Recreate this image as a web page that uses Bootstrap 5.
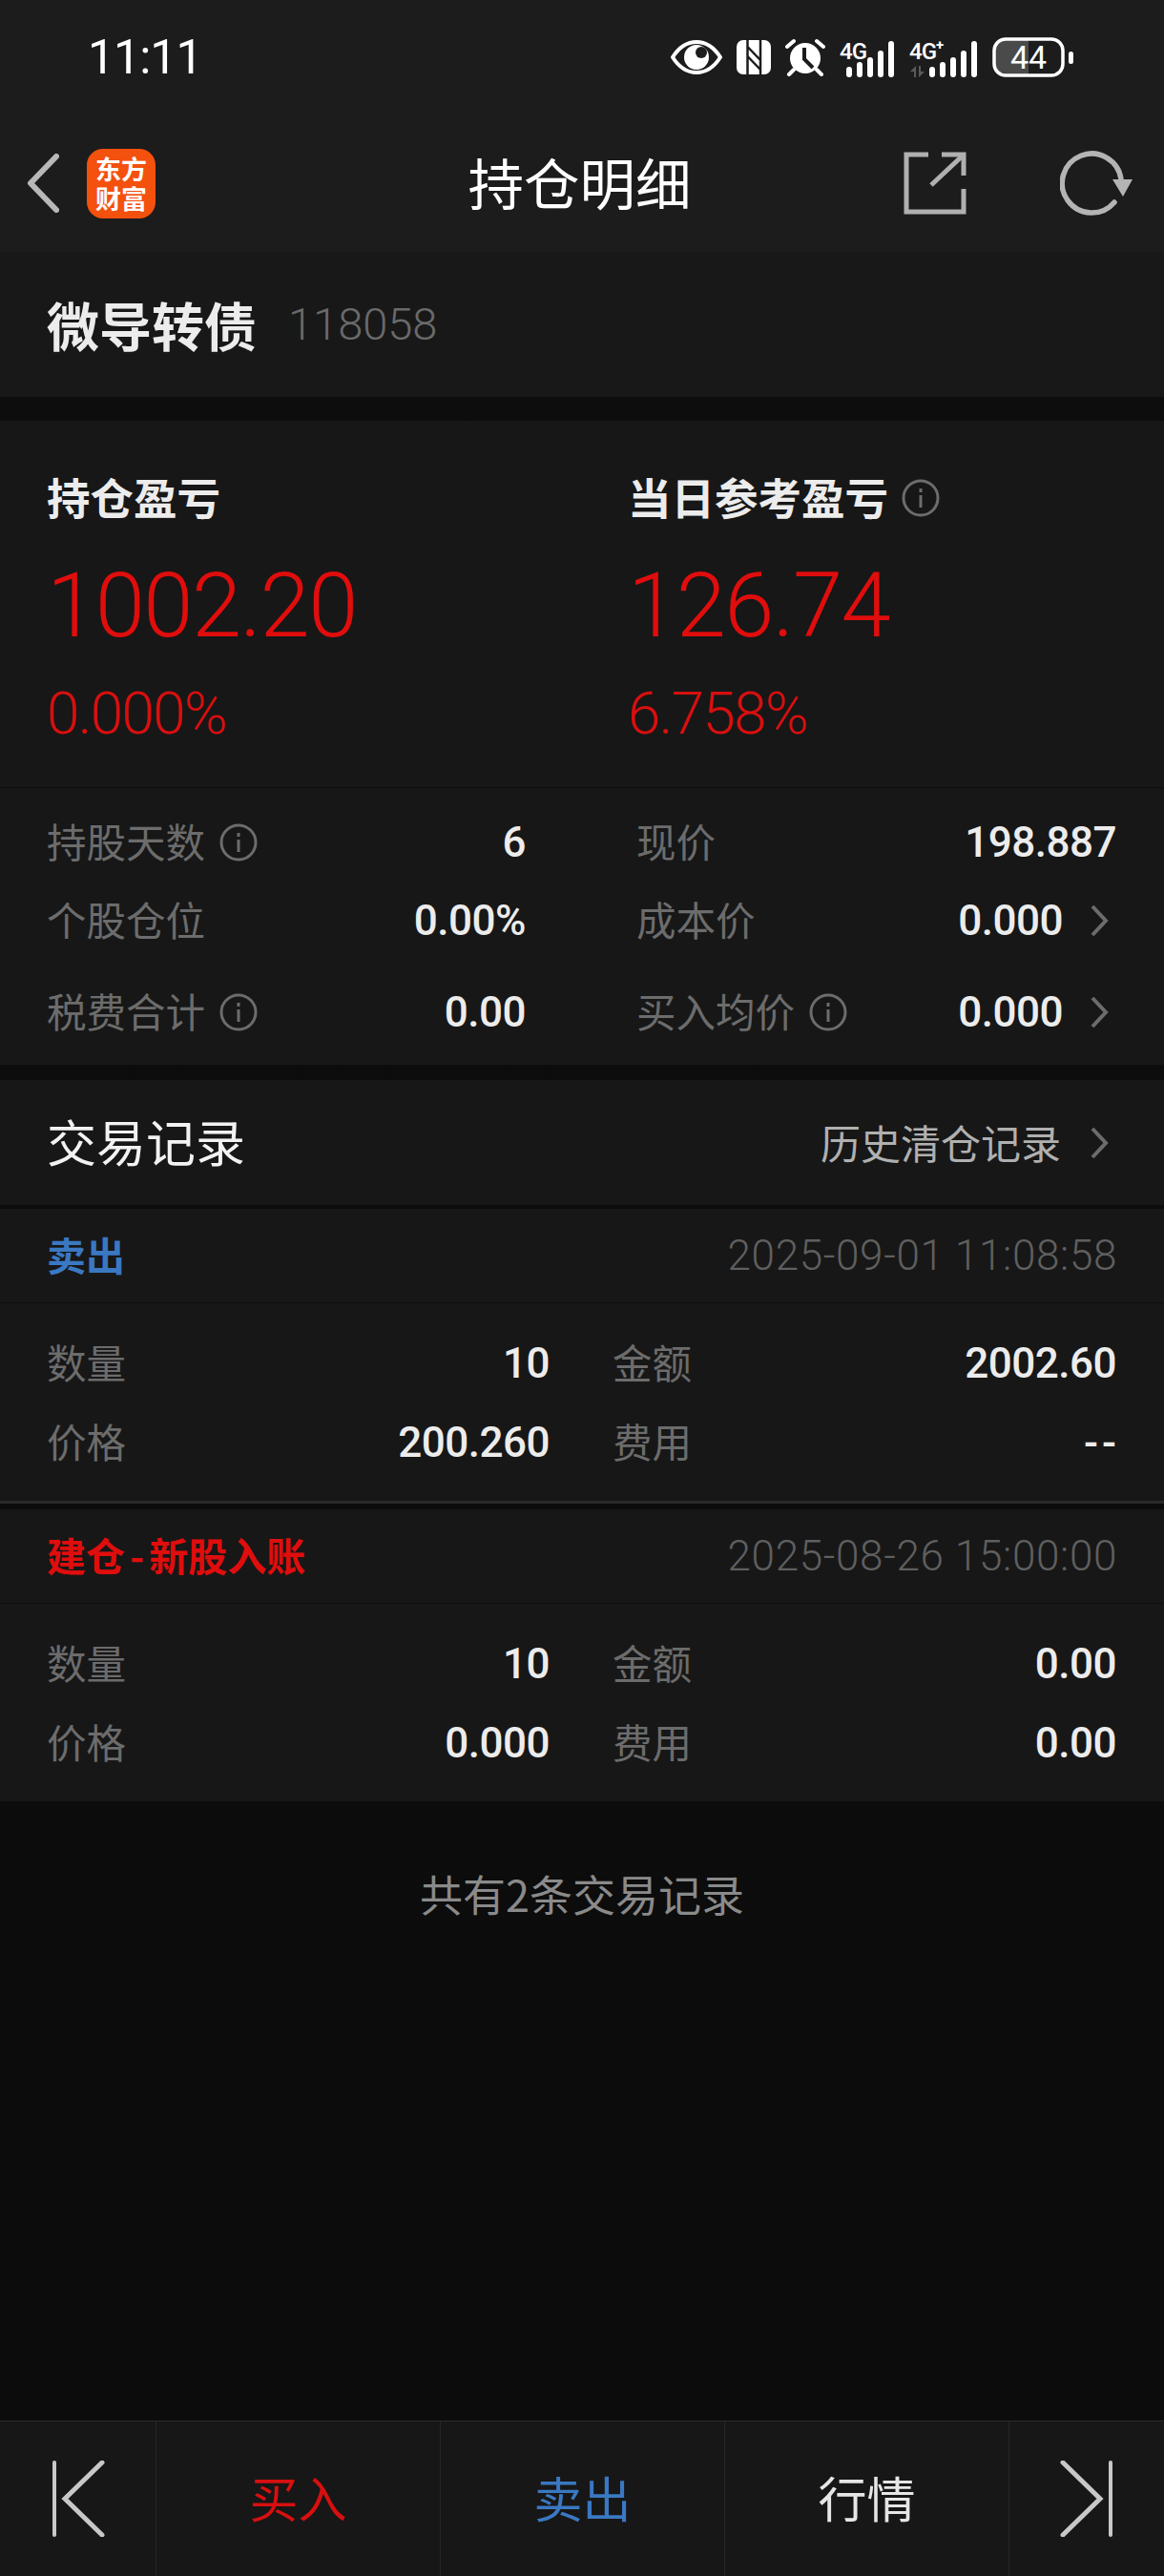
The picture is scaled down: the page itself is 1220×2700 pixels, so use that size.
<!DOCTYPE html>
<html lang="zh">
<head>
  <meta charset="utf-8">
  <title>持仓明细</title>
  <link href="https://cdn.jsdelivr.net/npm/bootstrap@5.3.0/dist/css/bootstrap.min.css" rel="stylesheet">
  <style>
    body {
      width: 1220px;
      height: 2700px;
      background: linear-gradient(#0d0d0d, #0c0c0c);
      font-family: Roboto, "Noto Sans CJK SC", sans-serif;
      color: #ececec;
    }
    .top-zone { background: #1c1c1c; height: 264px; }
    .status-strip { height: 120px; padding: 0 95px 0 92px; }
    .clock { font-size: 50px; line-height: 1; letter-spacing: -1px; color: #fff; }
    .status-icons { gap: 15px; }
    .head-strip { height: 144px; display: grid; grid-template-columns: 1fr auto 1fr; align-items: center; padding: 0 33px 0 28px; }
    .page-title { font-size: 58.5px; line-height: 1; color: #fff; padding-bottom: 4px; font-family: "Noto Sans CJK SC", sans-serif; }
    .app-logo {
      width: 72px; height: 73px; border-radius: 17px; background: #f4500e; color: #fff;
      font-family: "Noto Sans CJK SC", sans-serif; font-size: 27px; line-height: 31px; font-weight: 700;
      text-align: center;
    }
    .band { background: #171717; }
    .name-band { height: 152px; padding-left: 49px; gap: 33px; background: #181818; }
    .bond-name { font-size: 55px; font-weight: 700; color: #ececec; padding-bottom: 2px; font-family: "Noto Sans CJK SC", sans-serif; }
    .bond-code { font-size: 47px; font-weight: 300; color: #6a6a6a; }
    .gap-big { height: 25px; }
    .gap-small { height: 16px; }

    .profit-wrap { padding: 51px 0 41px 49px; border-bottom: 1px solid #0e0e0e; height: 385px; }
    .profit-col { width: 562px; flex-shrink: 0; }
    .profit-col:first-child { width: 609px; }
    .profit-label { height: 60px; font-size: 45.5px; font-weight: 700; color: #ececec; gap: 14px; font-family: "Noto Sans CJK SC", sans-serif; }
    .profit-label-text { padding-bottom: 4px; }
    .profit-num { height: 160px; padding-top: 3px; line-height: 160px; font-size: 94px; font-weight: 300; color: #e00d0d; letter-spacing: -1.5px; }
    .profit-pct { height: 72px; line-height: 72px; font-size: 62px; font-weight: 300; color: #d80f0f; letter-spacing: -1.7px; }

    .detail-wrap { padding: 16px 50px 14px 49px; }
    .pair-row { display: grid; grid-template-columns: 502px 503px; column-gap: 116px; height: 82px; }
    .pair-row.extra-top { margin-top: 14px; }
    .pair { display: flex; align-items: center; justify-content: space-between; }
    .pair-label { display: flex; align-items: center; gap: 15px; font-size: 41.5px; color: #6c6c6c; font-family: "Noto Sans CJK SC", sans-serif; }
    .label-text { padding-bottom: 3px; }
    .pair-value { font-size: 44px; font-weight: 500; color: #ececec; letter-spacing: -.5px; }
    .dash-value { letter-spacing: 4px; margin-right: -4px; }
    .with-arrow { gap: 28px; padding-right: 8px; }

    .record-title { height: 131px; padding: 0 58px 0 49px; }
    .record-title-text { font-size: 52px; color: #f2f2f2; padding-bottom: 3px; font-family: "Noto Sans CJK SC", sans-serif; }
    .record-link { font-size: 42px; color: #b0b0b0; gap: 30px; font-family: "Noto Sans CJK SC", sans-serif; }
    .sep-thin { height: 4px; background: #0c0c0c; }
    .sep-trade { height: 9px; background: #0c0c0c; border-top: 3px solid #2a2a2a; }
    .trade-head { height: 99px; padding: 0 50px 0 49px; border-bottom: 1px solid #0e0e0e; }
    .trade-kind { font-size: 41px; font-weight: 700; padding-bottom: 2px; font-family: "Noto Sans CJK SC", sans-serif; }
    .wide-dash { margin: 0 5px; }
    .kind-sell { color: #3a78c2; }
    .kind-buy { color: #e00d0d; }
    .trade-time { font-size: 44px; font-weight: 300; color: #5f5f5f; letter-spacing: .65px; margin-right: -1px; }
    .trade-body { padding: 21px 50px 20px 49px; }
    .trade-row { display: grid; grid-template-columns: 527px 528px; column-gap: 66px; height: 83px; }

    .foot-note { padding-top: 67px; font-size: 45px; line-height: 60px; color: #8a8a8a; font-family: "Noto Sans CJK SC", sans-serif; }
    .bottom-nav { height: 163px; background: #171717; border-top: 1px solid #2a2a2a; }
    .nav-cell { display: flex; align-items: center; justify-content: center; font-size: 51px; padding-bottom: 4px; border-left: 1px solid #262626; font-family: "Noto Sans CJK SC", sans-serif; }
    .nav-end { width: 163px; border-left: 0; padding: 0 0 0 15px; }
    .nav-end-r { width: 163px; padding: 0 15px 0 0; }
    .nav-main { width: 298px; }
    .nav-buy { color: #d80f0f; }
    .nav-sell { color: #3a78c2; }
    .nav-quote { color: #e6e6e6; }
  </style>
</head>
<body class="d-flex flex-column">

<div class="top-zone">
  <div class="status-strip d-flex align-items-center justify-content-between">
    <span class="clock">11:11</span>
    <div class="status-icons d-flex align-items-center">
      <!-- eye -->
      <svg width="54" height="40" viewBox="0 0 54 40">
        <path d="M2 20C9 9 18 4 27 4s18 5 25 16c-7 11-16 16-25 16S9 31 2 20z" fill="none" stroke="#fff" stroke-width="4" stroke-linejoin="round"/>
        <circle cx="27" cy="20" r="13" fill="#fff"/>
        <circle cx="32" cy="15" r="6" fill="#1c1c1c"/>
      </svg>
      <!-- nfc -->
      <svg width="36" height="36" viewBox="0 0 36 36">
        <rect width="36" height="36" rx="7" fill="#fff"/>
        <path d="M11.5 0v36M25 0v36M11.5 7L25 21M11.5 17L25 31" fill="none" stroke="#1c1c1c" stroke-width="2.5"/>
      </svg>
      <!-- alarm -->
      <svg width="42" height="40" viewBox="0 0 42 40">
        <circle cx="21" cy="21" r="16" fill="#fff"/>
        <path d="M20 10v12l9 9" fill="none" stroke="#1c1c1c" stroke-width="4"/>
        <path d="M2 9l7-6M40 9l-7-6M9 33l-5 5M33 33l5 5" fill="none" stroke="#fff" stroke-width="4" stroke-linecap="round"/>
      </svg>
      <!-- signal 1 -->
      <svg width="58" height="44" viewBox="0 -4 58 44">
        <text x="0" y="20" font-family="Roboto" font-size="24" font-weight="500" fill="#fff" textLength="29">4G</text>
        <rect x="7" y="28" width="6" height="11" rx="3" fill="#fff"/>
        <rect x="18" y="23" width="6" height="16" rx="3" fill="#fff"/>
        <rect x="29" y="18" width="6" height="21" rx="3" fill="#fff"/>
        <rect x="40" y="11" width="6" height="28" rx="3" fill="#fff"/>
        <rect x="51" y="1" width="6" height="38" rx="3" fill="#fff"/>
      </svg>
      <!-- signal 2 -->
      <svg width="72" height="44" viewBox="0 -4 72 44">
        <text x="0" y="20" font-family="Roboto" font-size="24" font-weight="500" fill="#fff" textLength="29">4G</text>
        <text x="28" y="10" font-family="Roboto" font-size="15" font-weight="700" fill="#fff">+</text>
        <path d="M1 33l6-6v12h-2v-6zM10 27h2v6h4l-6 6z" fill="#5a5a5a"/>
        <rect x="21" y="28" width="6" height="11" rx="3" fill="#fff"/>
        <rect x="32" y="23" width="6" height="16" rx="3" fill="#fff"/>
        <rect x="43" y="18" width="6" height="21" rx="3" fill="#fff"/>
        <rect x="54" y="11" width="6" height="28" rx="3" fill="#fff"/>
        <rect x="65" y="1" width="6" height="38" rx="3" fill="#fff"/>
      </svg>
      <!-- battery -->
      <svg width="85" height="42" viewBox="0 0 85 42">
        <path d="M14 3h24v36H14a12 12 0 0 1-12-12V15A12 12 0 0 1 14 3z" fill="#4a4a4a"/>
        <rect x="2" y="2" width="72" height="38" rx="12" fill="none" stroke="#fff" stroke-width="3.5"/>
        <rect x="80" y="15" width="5" height="13" rx="2.5" fill="#fff"/>
        <text x="38" y="33" text-anchor="middle" font-family="Roboto" font-size="34" fill="#fff">44</text>
      </svg>
    </div>
  </div>
  <div class="head-strip">
    <div class="d-flex align-items-center" style="gap:29px">
      <svg width="34" height="62" viewBox="0 0 34 62"><path d="M31 3L4 31l27 28" fill="none" stroke="#b8b8b8" stroke-width="6" stroke-linecap="round" stroke-linejoin="round"/></svg>
      <div class="app-logo d-flex flex-column justify-content-center"><div>东方</div><div>财富</div></div>
    </div>
    <div class="page-title">持仓明细</div>
    <div class="d-flex align-items-center justify-content-end" style="gap:98px">
      <svg width="66" height="66" viewBox="0 0 66 66">
        <path d="M26 3H3v60h60V39M63 25V3H40" fill="none" stroke="#b0b0b0" stroke-width="5"/>
        <path d="M29 35L62 4" fill="none" stroke="#b0b0b0" stroke-width="5"/>
      </svg>
      <svg width="76" height="70" viewBox="0 0 76 70">
        <path d="M57 55A31 31 0 1 1 64 31" fill="none" stroke="#b4b4b4" stroke-width="5.5" stroke-linecap="round"/>
        <path d="M55 31h21l-10 18z" fill="#b4b4b4"/>
      </svg>
    </div>
  </div>
</div>

<div class="name-band d-flex align-items-center">
  <span class="bond-name">微导转债</span>
  <span class="bond-code">118058</span>
</div>
<div class="gap-big"></div>

<div class="band">
  <div class="profit-wrap d-flex">
    <div class="profit-col">
      <div class="profit-label d-flex align-items-center"><span class="profit-label-text">持仓盈亏</span></div>
      <div class="profit-num">1002.20</div>
      <div class="profit-pct">0.000%</div>
    </div>
    <div class="profit-col">
      <div class="profit-label d-flex align-items-center"><span class="profit-label-text">当日参考盈亏</span>
        <svg width="40" height="40" viewBox="0 0 40 40"><circle cx="20" cy="20" r="18" fill="none" stroke="#6c6c6c" stroke-width="3"/><rect x="18.5" y="17" width="3" height="13" fill="#6c6c6c"/><rect x="18.5" y="10" width="3" height="4" fill="#6c6c6c"/></svg>
      </div>
      <div class="profit-num">126.74</div>
      <div class="profit-pct">6.758%</div>
    </div>
  </div>

  <div class="detail-wrap">
    <div class="pair-row">
      <div class="pair">
        <span class="pair-label"><span class="label-text">持股天数</span>
          <svg width="40" height="40" viewBox="0 0 40 40"><circle cx="20" cy="20" r="18" fill="none" stroke="#6c6c6c" stroke-width="3"/><rect x="18.5" y="17" width="3" height="13" fill="#6c6c6c"/><rect x="18.5" y="10" width="3" height="4" fill="#6c6c6c"/></svg>
        </span>
        <span class="pair-value">6</span>
      </div>
      <div class="pair">
        <span class="pair-label"><span class="label-text">现价</span></span>
        <span class="pair-value">198.887</span>
      </div>
    </div>
    <div class="pair-row">
      <div class="pair">
        <span class="pair-label"><span class="label-text">个股仓位</span></span>
        <span class="pair-value">0.00%</span>
      </div>
      <div class="pair">
        <span class="pair-label"><span class="label-text">成本价</span></span>
        <span class="pair-value d-flex align-items-center with-arrow">0.000
          <svg width="20" height="34" viewBox="0 0 20 34"><path d="M3 2l14 15L3 32" fill="none" stroke="#6c6c6c" stroke-width="4"/></svg>
        </span>
      </div>
    </div>
    <div class="pair-row extra-top">
      <div class="pair">
        <span class="pair-label"><span class="label-text">税费合计</span>
          <svg width="40" height="40" viewBox="0 0 40 40"><circle cx="20" cy="20" r="18" fill="none" stroke="#6c6c6c" stroke-width="3"/><rect x="18.5" y="17" width="3" height="13" fill="#6c6c6c"/><rect x="18.5" y="10" width="3" height="4" fill="#6c6c6c"/></svg>
        </span>
        <span class="pair-value">0.00</span>
      </div>
      <div class="pair">
        <span class="pair-label"><span class="label-text">买入均价</span>
          <svg width="40" height="40" viewBox="0 0 40 40"><circle cx="20" cy="20" r="18" fill="none" stroke="#6c6c6c" stroke-width="3"/><rect x="18.5" y="17" width="3" height="13" fill="#6c6c6c"/><rect x="18.5" y="10" width="3" height="4" fill="#6c6c6c"/></svg>
        </span>
        <span class="pair-value d-flex align-items-center with-arrow">0.000
          <svg width="20" height="34" viewBox="0 0 20 34"><path d="M3 2l14 15L3 32" fill="none" stroke="#6c6c6c" stroke-width="4"/></svg>
        </span>
      </div>
    </div>
  </div>
</div>
<div class="gap-small"></div>

<div class="band">
  <div class="record-title d-flex align-items-center justify-content-between">
    <span class="record-title-text">交易记录</span>
    <span class="record-link d-flex align-items-center"><span class="label-text">历史清仓记录</span>
      <svg width="20" height="34" viewBox="0 0 20 34"><path d="M3 2l14 15L3 32" fill="none" stroke="#6c6c6c" stroke-width="4"/></svg>
    </span>
  </div>
  <div class="sep-thin"></div>

  <div class="trade-head d-flex align-items-center justify-content-between">
    <span class="trade-kind kind-sell">卖出</span>
    <span class="trade-time">2025-09-01 11:08:58</span>
  </div>
  <div class="trade-body">
    <div class="trade-row">
      <div class="pair"><span class="pair-label"><span class="label-text">数量</span></span><span class="pair-value">10</span></div>
      <div class="pair"><span class="pair-label"><span class="label-text">金额</span></span><span class="pair-value">2002.60</span></div>
    </div>
    <div class="trade-row">
      <div class="pair"><span class="pair-label"><span class="label-text">价格</span></span><span class="pair-value">200.260</span></div>
      <div class="pair"><span class="pair-label"><span class="label-text">费用</span></span><span class="pair-value dash-value">--</span></div>
    </div>
  </div>
  <div class="sep-trade"></div>

  <div class="trade-head d-flex align-items-center justify-content-between">
    <span class="trade-kind kind-buy">建仓<span class="wide-dash">-</span>新股入账</span>
    <span class="trade-time">2025-08-26 15:00:00</span>
  </div>
  <div class="trade-body">
    <div class="trade-row">
      <div class="pair"><span class="pair-label"><span class="label-text">数量</span></span><span class="pair-value">10</span></div>
      <div class="pair"><span class="pair-label"><span class="label-text">金额</span></span><span class="pair-value">0.00</span></div>
    </div>
    <div class="trade-row">
      <div class="pair"><span class="pair-label"><span class="label-text">价格</span></span><span class="pair-value">0.000</span></div>
      <div class="pair"><span class="pair-label"><span class="label-text">费用</span></span><span class="pair-value">0.00</span></div>
    </div>
  </div>
</div>

<div class="foot-note text-center flex-grow-1">共有2条交易记录</div>

<div class="bottom-nav d-flex">
  <div class="nav-cell nav-end">
    <svg width="70" height="80" viewBox="0 0 70 80"><path d="M3 2v76" stroke="#c8c8c8" stroke-width="4" fill="none" stroke-linecap="round"/><path d="M53 2L14 40l39 38" stroke="#c8c8c8" stroke-width="5" fill="none" stroke-linecap="round"/></svg>
  </div>
  <div class="nav-cell nav-main nav-buy">买入</div>
  <div class="nav-cell nav-main nav-sell">卖出</div>
  <div class="nav-cell nav-main nav-quote">行情</div>
  <div class="nav-cell nav-end-r">
    <svg width="70" height="80" viewBox="0 0 70 80"><path d="M67 2v76" stroke="#c8c8c8" stroke-width="4" fill="none" stroke-linecap="round"/><path d="M17 2l39 38-39 38" stroke="#c8c8c8" stroke-width="5" fill="none" stroke-linecap="round"/></svg>
  </div>
</div>

<script src="https://cdn.jsdelivr.net/npm/bootstrap@5.3.0/dist/js/bootstrap.bundle.min.js"></script>
</body>
</html>
